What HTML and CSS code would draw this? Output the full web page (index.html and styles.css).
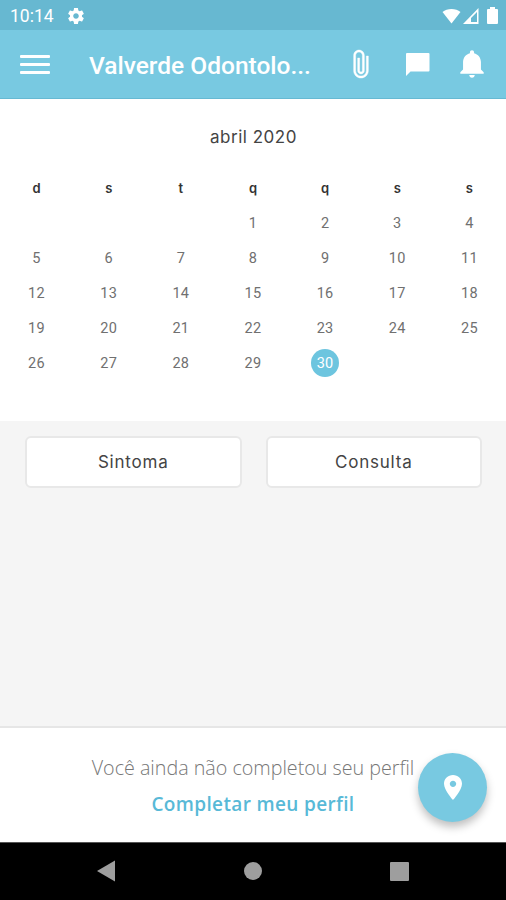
FILE: index.html
```
<!DOCTYPE html>
<html lang="pt-BR">
<head>
    <meta charset="UTF-8">
    <meta name="viewport" content="width=device-width, initial-scale=1.0">
    <title>Valverde Odontologia</title>
    <link rel="stylesheet" href="styles.css">
</head>
<body>
    <!-- Status bar -->
    <div class="status-bar">
        <span class="clock">10:14</span>
        <svg class="gear" viewBox="2 2 20 20"><path d="M19.43 12.98c.04-.32.07-.64.07-.98s-.03-.66-.07-.98l2.11-1.65c.19-.15.24-.42.12-.64l-2-3.46c-.12-.22-.39-.3-.61-.22l-2.49 1c-.52-.4-1.08-.73-1.69-.98l-.38-2.65C14.46 2.18 14.25 2 14 2h-4c-.25 0-.46.18-.49.42l-.38 2.65c-.61.25-1.17.59-1.69.98l-2.49-1c-.23-.09-.49 0-.61.22l-2 3.46c-.13.22-.07.49.12.64l2.11 1.65c-.04.32-.07.65-.07.98s.03.66.07.98l-2.11 1.65c-.19.15-.24.42-.12.64l2 3.46c.12.22.39.3.61.22l2.49-1c.52.4 1.08.73 1.69.98l.38 2.65c.03.24.24.42.49.42h4c.25 0 .46-.18.49-.42l.38-2.65c.61-.25 1.17-.59 1.69-.98l2.49 1c.23.09.49 0 .61-.22l2-3.46c.12-.22.07-.49-.12-.64l-2.11-1.65zM12 15.5c-1.93 0-3.5-1.57-3.5-3.5s1.57-3.5 3.5-3.5 3.5 1.57 3.5 3.5-1.57 3.5-3.5 3.5z"/></svg>
        <div class="status-icons">
            <svg width="19" height="16" viewBox="0 0 19 16"><path d="M.5 4C5-.1 14-.1 18.500 4L9.500 15.500z"/></svg>
            <svg width="16" height="16" viewBox="0 0 16 16"><path fill-rule="evenodd" d="M15.500 0v16H0zM8 10V14h6V4z"/></svg>
            <svg width="11" height="17" viewBox="0 0 11 17"><path d="M3 0h5v2h2q1 0 1 1v13q0 1-1 1H1q-1 0-1-1V3q0-1 1-1h2z"/></svg>
        </div>
    </div>

    <!-- App header -->
    <header class="header">
        <button class="menu" aria-label="Menu"><span></span><span></span><span></span></button>
        <h1 class="title">Valverde Odontolo...</h1>
        <div class="actions">
            <svg width="32" height="32" viewBox="0 0 512 512"><path stroke="currentColor" stroke-width="7" d="M341.334 128v234.666C341.334 409.604 302.938 448 256 448c-46.937 0-85.333-38.396-85.333-85.334V117.334C170.667 87.469 194.135 64 224 64c29.864 0 53.333 23.469 53.333 53.334v245.333c0 11.729-9.605 21.333-21.333 21.333s-21.334-9.604-21.334-21.333V160h-32v202.667C202.667 392.531 226.135 416 256 416s53.334-23.469 53.334-53.333V117.334C309.334 70.401 270.938 32 224 32c-46.938 0-85.334 38.401-85.334 85.334v245.332C138.667 427.729 190.938 480 256 480c65.062 0 117.334-52.271 117.334-117.334V128h-32z"/></svg>
            <svg width="24" height="23" viewBox="0 0 24 23"><path d="M1 0h21.500q1 0 1 1v16.500q0 1-1 1H4.500L0 23V1Q0 0 1 0z"/></svg>
            <svg width="34" height="34" viewBox="0 0 512 512"><path d="M256 464c22.779 0 41.411-18.719 41.411-41.6h-82.823c0 22.881 18.633 41.6 41.412 41.6zm134.589-124.8V224.8c0-63.44-44.516-117.518-103.53-131.041V79.2c0-17.682-13.457-31.2-31.059-31.2s-31.059 13.518-31.059 31.2v14.559c-59.015 13.523-103.53 67.601-103.53 131.041v114.4L80 380.8v20.8h352v-20.8l-41.411-41.6z"/></svg>
        </div>
    </header>

    <!-- Calendar -->
    <section class="calendar">
        <h2 class="month">abril 2020</h2>
        <div class="grid weekdays">
            <span>d</span><span>s</span><span>t</span><span>q</span><span>q</span><span>s</span><span>s</span>
        </div>
        <div class="grid days">
            <span class="first">1</span><span>2</span><span>3</span><span>4</span>
            <span>5</span><span>6</span><span>7</span><span>8</span><span>9</span><span>10</span><span>11</span>
            <span>12</span><span>13</span><span>14</span><span>15</span><span>16</span><span>17</span><span>18</span>
            <span>19</span><span>20</span><span>21</span><span>22</span><span>23</span><span>24</span><span>25</span>
            <span>26</span><span>27</span><span>28</span><span>29</span><span class="today">30</span>
        </div>
    </section>

    <main class="content">
        <button class="option">Sintoma</button>
        <button class="option">Consulta</button>
    </main>

    <!-- Profile notice -->
    <section class="profile">
        <p class="notice">Você ainda não completou seu perfil</p>
        <a class="complete">Completar meu perfil</a>
        <button class="fab" aria-label="Local">
            <svg width="18" height="25" viewBox="5 2 14 20" preserveAspectRatio="none"><path d="M12 2C8.13 2 5 5.13 5 9c0 5.25 7 13 7 13s7-7.75 7-13c0-3.87-3.13-7-7-7zm0 9.5c-1.38 0-2.5-1.12-2.5-2.5s1.12-2.5 2.5-2.5 2.5 1.12 2.5 2.5-1.12 2.5-2.5 2.5z"/></svg>
        </button>
    </section>

    <!-- Android navigation -->
    <nav class="nav-bar">
        <svg width="18" height="22" viewBox="0 0 18 22"><path d="M18 .5v21L0 11z"/></svg>
        <span class="home"></span>
        <span class="recent"></span>
    </nav>
</body>
</html>
```
FILE: styles.css
```
* {
    box-sizing: border-box;
}
body {
    margin: 0;
    height: 900px;
    display: flex;
    flex-direction: column;
    background: #f5f5f5;
    font-family: Inter, sans-serif;
    overflow: hidden;
}
svg {
    display: block;
    flex: none;
    fill: currentColor;
}
button {
    border: none;
    padding: 0;
    cursor: pointer;
}
.status-bar {
    height: 30px;
    flex: none;
    display: flex;
    align-items: center;
    padding: 1px 8px 0 10px;
    background: #67b8d1;
    color: #fff;
}
.clock {
    width: 58px;
    font: 17.5px/28px Roboto, sans-serif;
}
.gear {
    width: 16px;
    height: 16px;
}
.status-icons {
    display: flex;
    align-items: center;
    gap: 2px;
    margin-left: auto;
}
.status-icons svg:last-child {
    margin-left: 6px;
}
.header {
    height: 69px;
    flex: none;
    display: flex;
    align-items: center;
    padding: 0 17px 0 20px;
    background: #78c9e1;
    border-bottom: 1px solid #66b9d3;
    color: #fff;
}
.menu {
    width: 30px;
    display: flex;
    flex-direction: column;
    gap: 5px;
    background: none;
}
.menu span {
    height: 3px;
    background: #fff;
    border-radius: 1px;
}
.title {
    margin: 4px 0 0 39px;
    font: 500 24.5px/30px Roboto, sans-serif;
    white-space: nowrap;
}
.actions {
    display: flex;
    align-items: center;
    margin-left: auto;
}
.actions svg:nth-child(2) {
    margin: 0 25px 0 29px;
}
.calendar {
    height: 322px;
    flex: none;
    padding-top: 26px;
    background: #fff;
}
.month {
    margin: 0;
    padding-left: 1px;
    font-size: 17px;
    font-weight: 400;
    line-height: 24px;
    letter-spacing: 0.5px;
    text-align: center;
    color: #444;
}
.grid {
    display: grid;
    grid-template-columns: repeat(7, 72.15px);
    justify-content: center;
    text-align: center;
}
.weekdays {
    margin-top: 28px;
    font-size: 13px;
    font-weight: 600;
    line-height: 22px;
    color: #333;
}
.days {
    margin-top: 6px;
    grid-auto-rows: 35px;
    align-items: center;
    justify-items: center;
    font: 14.5px/28px Roboto, sans-serif;
    letter-spacing: 0.3px;
    color: #707070;
}
.days span {
    height: 28px;
    padding-top: 1px;
}
.days .first {
    grid-column: 4;
}
.days .today {
    width: 28px;
    border-radius: 50%;
    background: #6dc5df;
    color: #fff;
}
.content {
    flex: 1;
    display: grid;
    grid-template-columns: 1fr 1fr;
    gap: 24px;
    align-items: start;
    padding: 15px 24px 0 25px;
}
.option {
    height: 52px;
    background: #fff;
    border: 2px solid #e8e8e8;
    border-radius: 6px;
    font: 17px/24px Inter, sans-serif;
    letter-spacing: 0.8px;
    color: #444;
}
.profile {
    position: relative;
    height: 116px;
    flex: none;
    padding-top: 26px;
    border-top: 2px solid #e6e6e6;
    background: #fff;
    text-align: center;
    font-family: "Open Sans", sans-serif;
}
.notice {
    margin: 0;
    font-size: 19.7px;
    font-weight: 300;
    line-height: 28px;
    color: #777;
}
.complete {
    display: block;
    margin-top: 8px;
    font-size: 19px;
    font-weight: 600;
    line-height: 28px;
    letter-spacing: 0.35px;
    color: #58b9d7;
}
/* floating over the notice */
.fab {
    position: absolute;
    right: 19px;
    top: 25px;
    width: 69px;
    height: 69px;
    display: flex;
    align-items: center;
    justify-content: center;
    border-radius: 50%;
    background: #78c9e1;
    box-shadow: 0 5px 8px rgba(0, 0, 0, 0.25);
    color: #fff;
}
.nav-bar {
    height: 58px;
    flex: none;
    display: flex;
    align-items: center;
    justify-content: space-between;
    padding: 0 97px 1px;
    background: #000;
    border-top: 1px solid #555;
    color: #9e9e9e;
}
.home {
    width: 18px;
    height: 18px;
    border-radius: 50%;
    background: #9e9e9e;
}
.recent {
    width: 19px;
    height: 19px;
    border-radius: 1px;
    background: #9e9e9e;
}
```
